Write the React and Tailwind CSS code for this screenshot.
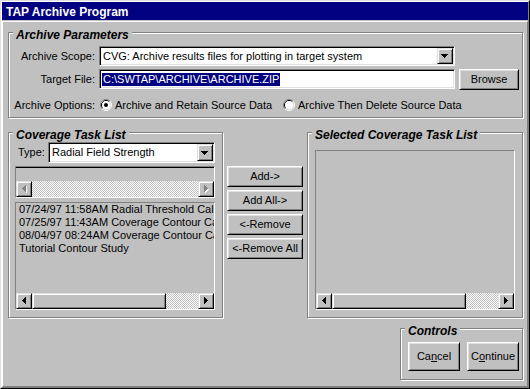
import React from "react";

const RAISED =
  "bg-[#c0c0c0] border border-t-[#dfdfdf] border-l-[#dfdfdf] border-r-black border-b-black shadow-[inset_1px_1px_0_#fff,inset_-1px_-1px_0_#808080]";
const BUTTON =
  "bg-[#c0c0c0] border border-t-white border-l-white border-r-black border-b-black shadow-[inset_1px_1px_0_#dfdfdf,inset_-1px_-1px_0_#808080] flex items-center justify-center text-black font-normal text-[11px]";
const SUNKEN =
  "border border-t-[#808080] border-l-[#808080] border-r-white border-b-white shadow-[inset_1px_1px_0_#000,inset_-1px_-1px_0_#dfdfdf] p-px";
const DITHER =
  "bg-[image:repeating-conic-gradient(#c0c0c0_0_25%,#ffffff_0_50%)] bg-[length:2px_2px]";
const LISTBOX =
  "border border-t-[#808080] border-l-[#808080] border-r-white border-b-white";

function Group({ title, className, children }) {
  return (
    <div
      className={
        "relative border border-[#808080] shadow-[inset_1px_1px_0_#fff,1px_1px_0_#fff] " +
        className
      }
    >
      <span className="absolute left-[4px] -top-[5px] bg-[#c0c0c0] px-[3px] font-bold italic text-[12px] leading-[14px] whitespace-nowrap">
        {title}
      </span>
      {children}
    </div>
  );
}

function DownArrow() {
  return (
    <svg width="8" height="4" viewBox="0 0 8 4" shapeRendering="crispEdges">
      <path d="M0 0h7v1h-7zM1 1h5v1h-5zM2 2h3v1h-3zM3 3h1v1h-1z" fill="#000" />
    </svg>
  );
}

function Combo({ className, text }) {
  return (
    <div className={SUNKEN + " bg-white flex " + className}>
      <div className="flex-1 pl-[2px] flex items-center overflow-hidden whitespace-nowrap">
        {text}
      </div>
      <div className={RAISED + " w-[16px] h-full flex items-center justify-center"}>
        <DownArrow />
      </div>
    </div>
  );
}

function ArrowBtn({ dir, disabled }) {
  const d =
    dir === "left"
      ? "M3 0h1v7h-1zM2 1h1v5h-1zM1 2h1v3h-1zM0 3h1v1h-1z"
      : "M0 0h1v7h-1zM1 1h1v5h-1zM2 2h1v3h-1zM3 3h1v1h-1z";
  return (
    <div className={RAISED + " w-[16px] h-[16px] shrink-0"}>
      <svg width="14" height="14" viewBox="0 0 14 14" shapeRendering="crispEdges">
        <g transform="translate(5 3)">
          {disabled && <path d={d} fill="#fff" transform="translate(1 1)" />}
          <path d={d} fill={disabled ? "#808080" : "#000"} />
        </g>
      </svg>
    </div>
  );
}

function HScroll({ disabled, thumb }) {
  return (
    <div className="h-[16px] flex shrink-0">
      <ArrowBtn dir="left" disabled={disabled} />
      {thumb && <div className={RAISED + " w-[134px] h-[16px] shrink-0"} />}
      <div className={"flex-1 h-[16px] " + DITHER} />
      <ArrowBtn dir="right" disabled={disabled} />
    </div>
  );
}

function Radio({ checked }) {
  return (
    <svg width="12" height="12" viewBox="0 0 12 12" className="shrink-0">
      <path d="M2.11 9.89A5.5 5.5 0 0 1 9.89 2.11" fill="none" stroke="#808080" />
      <path d="M9.89 2.11A5.5 5.5 0 0 1 2.11 9.89" fill="none" stroke="#ffffff" />
      <path d="M2.82 9.18A4.5 4.5 0 0 1 9.18 2.82" fill="none" stroke="#000000" />
      <path d="M9.18 2.82A4.5 4.5 0 0 1 2.82 9.18" fill="none" stroke="#dfdfdf" />
      <circle cx="6" cy="6" r="4" fill="#ffffff" />
      {checked && <circle cx="6" cy="6" r="2" fill="#000000" />}
    </svg>
  );
}

export default function App() {
  return (
    <div className="w-[530px] h-[389px] bg-[#c0c0c0] border border-t-[#dfdfdf] border-l-[#dfdfdf] border-r-black border-b-black font-['Liberation_Sans',Arial,sans-serif] text-[11px] leading-[13px] text-black">
      <div className="h-full flex flex-col border border-t-white border-l-white border-r-[#808080] border-b-[#808080]">
        <div className="h-[18px] shrink-0 bg-[#000080] text-white font-bold text-[12px] leading-[16px] pt-[2px] pl-[4px]">
          TAP Archive Program
        </div>
        <div className="mt-px flex-1 border border-t-white border-l-white border-r-[#808080] border-b-[#808080] pt-[10px] pl-[5px]">
          <Group title="Archive Parameters" className="w-[515px] h-[86px] pt-[13px]">
            <div className="flex h-[20px]">
              <div className="w-[87px] pr-px text-right leading-[20px]">Archive Scope:</div>
              <Combo
                className="ml-[3px] w-[356px] h-[20px]"
                text="CVG: Archive results files for plotting in target system"
              />
            </div>
            <div className="flex mt-[3px] h-[21px]">
              <div className="w-[87px] pr-px text-right leading-[20px]">Target File:</div>
              <div className={SUNKEN + " ml-[3px] w-[356px] h-[20px] bg-white flex items-center"}>
                <span className="ml-px bg-[#000080] text-white h-[13px] leading-[13px] px-px whitespace-nowrap">
                  {"C:\\SWTAP\\ARCHIVE\\ARCHIVE.ZIP"}
                </span>
              </div>
              <button className={BUTTON + " ml-[4px] w-[60px] h-[21px]"}>Browse</button>
            </div>
            <div className="flex items-center mt-[8px] h-[14px]">
              <div className="w-[87px] pr-px text-right">Archive Options:</div>
              <div className="ml-[4px] w-[183px] flex items-center">
                <Radio checked />
                <span className="ml-[3px] whitespace-nowrap">Archive and Retain Source Data</span>
              </div>
              <div className="flex items-center">
                <Radio />
                <span className="ml-[3px] whitespace-nowrap">Archive Then Delete Source Data</span>
              </div>
            </div>
          </Group>

          <div className="flex gap-[4px] mt-[14px]">
            <Group title="Coverage Task List" className="w-[215px] h-[186px] pt-[9px] pl-[6px]">
              <div className="flex items-center h-[21px]">
                <div className="w-[33px] pl-[3px]">Type:</div>
                <Combo className="w-[167px] h-[21px]" text="Radial Field Strength" />
              </div>
              <div
                className={
                  LISTBOX +
                  " mt-[3px] w-[200px] h-[32px] flex flex-col justify-end shadow-[inset_0_1px_0_#000]"
                }
              >
                <HScroll disabled />
              </div>
              <div className={LISTBOX + " mt-[4px] w-[200px] h-[108px] flex flex-col"}>
                <div className="flex-1 overflow-hidden pl-[3px] whitespace-nowrap">
                  <div>07/24/97 11:58AM Radial Threshold Calc</div>
                  <div>07/25/97 11:43AM Coverage Contour Ca</div>
                  <div>08/04/97 08:24AM Coverage Contour Ca</div>
                  <div>Tutorial Contour Study</div>
                </div>
                <HScroll thumb />
              </div>
            </Group>

            <div className="w-[76px] pt-[34px] flex flex-col gap-[3px]">
              <button className={BUTTON + " h-[21px]"}>{"Add->"}</button>
              <button className={BUTTON + " h-[21px]"}>{"Add All->"}</button>
              <button className={BUTTON + " h-[21px]"}>{"<-Remove"}</button>
              <button className={BUTTON + " h-[21px]"}>{"<-Remove All"}</button>
            </div>

            <Group
              title="Selected Coverage Task List"
              className="w-[216px] h-[186px] pt-[17px] pl-[7px]"
            >
              <div className={LISTBOX + " w-[200px] h-[160px] flex flex-col justify-end"}>
                <HScroll thumb />
              </div>
            </Group>
          </div>

          <div className="flex justify-end w-[515px] mt-[10px]">
            <Group title="Controls" className="w-[123px] h-[52px] pt-[13px] pl-[7px] flex gap-[7px]">
              <button className={BUTTON + " w-[52px] h-[29px]"}>
                Ca<span className="underline">n</span>cel
              </button>
              <button className={BUTTON + " w-[52px] h-[29px]"}>
                C<span className="underline">o</span>ntinue
              </button>
            </Group>
          </div>
        </div>
      </div>
    </div>
  );
}
